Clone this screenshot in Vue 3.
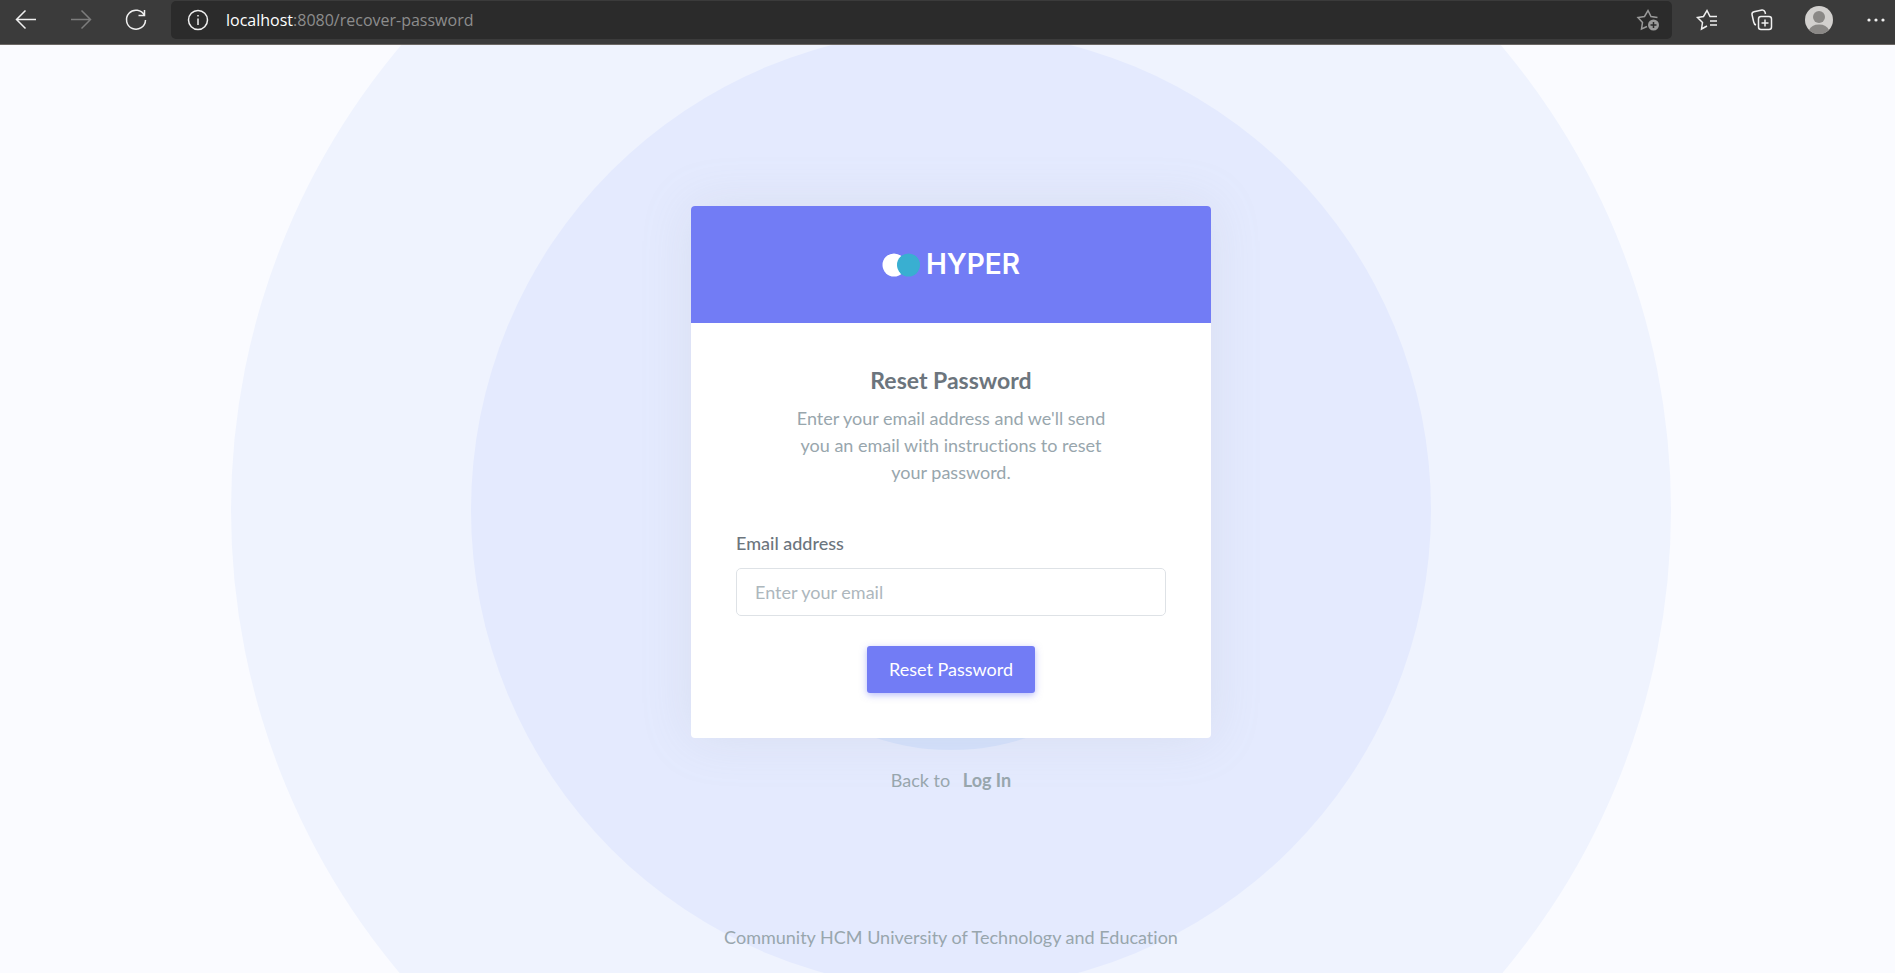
<script setup>
import { ref } from 'vue'

const email = ref('')
</script>

<template>
  <div class="window">
    <header class="toolbar">
      <nav class="nav" aria-label="Navigation">
        <button type="button" aria-label="Back">
          <svg class="icon" viewBox="0 0 24 24"><path d="M22 11.500H2.500M11.500 2.500L2.500 11.500l9 9" /></svg>
        </button>
        <button type="button" class="dim" aria-label="Forward">
          <svg class="icon" viewBox="0 0 24 24"><path d="M2 11.500h19.500M12.500 2.500l9 9-9 9" /></svg>
        </button>
        <button type="button" aria-label="Refresh">
          <svg class="icon" viewBox="0 0 24 24"><path d="M20.500 7.500A9.500 9.500 0 1 0 21.500 12M20.500 2v5.500h-6" /></svg>
        </button>
      </nav>
      <div class="address">
        <button type="button" aria-label="Site information">
          <svg class="icon" viewBox="0 0 24 24"><circle cx="12" cy="12" r="9.500" /><path d="M12 10.500v6.500M12 7v1.500" /></svg>
        </button>
        <span class="url"><b>localhost</b>:8080/recover-password</span>
        <button type="button" class="star" aria-label="Add to favorites">
          <svg class="icon" viewBox="0 0 24 24">
            <path d="M11 18.500l-5.500 2.500 1-6.500L2 9.500l6.500-1L12 2.500l3 6 6.500 1" />
            <circle class="solid" cx="17.500" cy="17" r="5.500" />
            <path class="plus" d="M17.500 14v6M14.500 17h6" />
          </svg>
        </button>
      </div>
      <div class="tools">
        <button type="button" aria-label="Favorites">
          <svg class="icon" viewBox="0 0 24 24"><path d="M12 18l-5.500 3 1-6.500L2.500 9.500l6-1L12 2.500l3 6h7M15 13h7M15 17h7" /></svg>
        </button>
        <button type="button" aria-label="Collections">
          <svg class="icon" viewBox="0 0 24 24"><rect x="8.500" y="8.500" width="13" height="13" rx="2.500" /><path d="M15 11.500v7M11.500 15h7M6 17c-1.500-.5-2-1.500-2.300-3L2 6.500C1.800 5 2.500 4 4 3.700L12 2c1.500-.2 2.500.5 3 2l.5 2" /></svg>
        </button>
        <button type="button" aria-label="Profile">
          <svg class="avatar" viewBox="0 0 28 28">
            <circle cx="14" cy="14" r="14" fill="#d2d0ce" />
            <circle cx="14" cy="11" r="6" fill="#8a8886" />
            <path d="M4 24a10.500 8 0 0 1 20 0 14 14 0 0 1-20 0z" fill="#8a8886" />
          </svg>
        </button>
        <button type="button" aria-label="Settings and more">
          <svg class="icon" viewBox="0 0 24 24"><g class="solid"><circle cx="5" cy="12" r="1.600" /><circle cx="12" cy="12" r="1.600" /><circle cx="19" cy="12" r="1.600" /></g></svg>
        </button>
      </div>
    </header>

    <main class="page">
      <svg class="rings" viewBox="0 0 1440 1440" aria-hidden="true">
        <circle cx="720" cy="720" r="720" fill="#eff3fe" />
        <circle cx="720" cy="720" r="480" fill="#e4eafe" />
        <circle cx="720" cy="720" r="240" fill="#d5e2fd" />
      </svg>

      <section class="content">
        <div class="card">
          <div class="brand">
            <svg class="mark" viewBox="0 0 38 24" aria-hidden="true">
              <circle cx="12" cy="12" r="11.500" fill="#fff" />
              <circle cx="26.500" cy="12" r="11.500" fill="#39afd1" />
            </svg>
            <span>HYPER</span>
          </div>
          <div class="body">
            <h1>Reset Password</h1>
            <p class="intro">Enter your email address and we'll send you an email with instructions to reset your password.</p>
            <form @submit.prevent>
              <label for="email">Email address</label>
              <input id="email" v-model="email" type="email" placeholder="Enter your email" />
              <button type="submit">Reset Password</button>
            </form>
          </div>
        </div>
        <p class="back">Back to <a href="#login">Log In</a></p>
      </section>

      <footer>Community HCM University of Technology and Education</footer>
    </main>
  </div>
</template>

<style>
body {
  margin: 0;
}
</style>

<style scoped>
* {
  box-sizing: border-box;
}

.window {
  display: flex;
  flex-direction: column;
  min-height: 100vh;
  font-family: Lato, "Open Sans", sans-serif;
  font-size: 18px;
  font-variant-ligatures: none;
  line-height: 27px;
  color: #98a6ad;
}

button {
  font: inherit;
}

.toolbar {
  display: flex;
  align-items: flex-start;
  height: 45px;
  padding-top: 1px;
  background: #3b3b3b;
  border-bottom: 1px solid #6b6764;
  color: #f0f0f0;
}

.toolbar button {
  display: grid;
  place-items: center;
  padding: 0;
  border: 0;
  background: none;
  color: inherit;
}

.nav,
.tools {
  display: flex;
  align-items: center;
  height: 38px;
}

.nav {
  gap: 31px;
  padding: 0 23px 0 14px;
}

.tools {
  gap: 31px;
  padding: 0 7px 0 23px;
}

.toolbar .dim {
  color: #7c7c7c;
}

.icon {
  display: block;
  width: 24px;
  height: 24px;
  fill: none;
  stroke: currentColor;
  stroke-width: 1.5;
}

.solid {
  fill: currentColor;
  stroke: none;
}

.plus {
  stroke: #2b2b2b;
}

.avatar {
  display: block;
  width: 28px;
  height: 28px;
}

.address {
  display: flex;
  flex: 1;
  align-items: center;
  height: 38px;
  padding: 0 12px 0 15px;
  border-radius: 5px;
  background: #2b2b2b;
}

.url {
  flex: 1;
  padding-left: 16px;
  font-family: "Open Sans", sans-serif;
  font-size: 16px;
  line-height: 24px;
  color: #8d8d8d;
}

.url b {
  font-weight: 400;
  color: #fff;
}

.toolbar .star {
  color: #9a9a9a;
}

.page {
  position: relative;
  display: flex;
  flex: 1;
  flex-direction: column;
  align-items: center;
  padding: 161px 0 22px 7px;
  overflow: hidden;
  background: #fafbff;
}

.rings {
  position: absolute;
  top: 50%;
  left: 50%;
  width: 1440px;
  height: 1440px;
  margin: -719px 0 0 -717px;
}

.content {
  position: relative;
  width: 520px;
  max-width: 100%;
}

.card {
  overflow: hidden;
  border-radius: 4px;
  background: #fff;
  box-shadow: 0 0 52px rgba(154, 161, 171, 0.16);
}

.brand {
  display: flex;
  align-items: center;
  justify-content: center;
  gap: 6px;
  height: 117px;
  background: #727cf5;
  font-family: Inter, Lato, sans-serif;
  font-size: 28px;
  font-weight: 600;
  color: #fff;
}

.mark {
  width: 38px;
  height: 24px;
}

.body {
  padding: 42px 45px 45px;
}

h1 {
  margin: 0 0 10px;
  text-align: center;
  font-size: 23px;
  line-height: 30px;
  font-weight: 700;
  color: #6c757d;
}

.intro {
  width: 322px;
  margin: 0 auto 44px;
  text-align: center;
}

form {
  display: flex;
  flex-direction: column;
}

label {
  margin-bottom: 11px;
  font-weight: 500;
  color: #6c757d;
}

input {
  height: 48px;
  padding: 0 18px;
  border: 1px solid #dee2e6;
  border-radius: 5px;
  background: #fff;
  font: inherit;
  color: #6c757d;
}

input::placeholder {
  color: #adb7bd;
  opacity: 1;
}

form button {
  align-self: center;
  width: 168px;
  height: 47px;
  margin-top: 30px;
  padding: 0;
  border: 0;
  border-radius: 3px;
  background: #727cf5;
  box-shadow: 0 2px 7px rgba(114, 124, 245, 0.5);
  color: #fff;
}

.back {
  margin: 29px 0 0;
  text-align: center;
}

.back a {
  margin-left: 8px;
  font-weight: 700;
  color: inherit;
  text-decoration: none;
}

footer {
  position: relative;
  margin-top: auto;
}
</style>
